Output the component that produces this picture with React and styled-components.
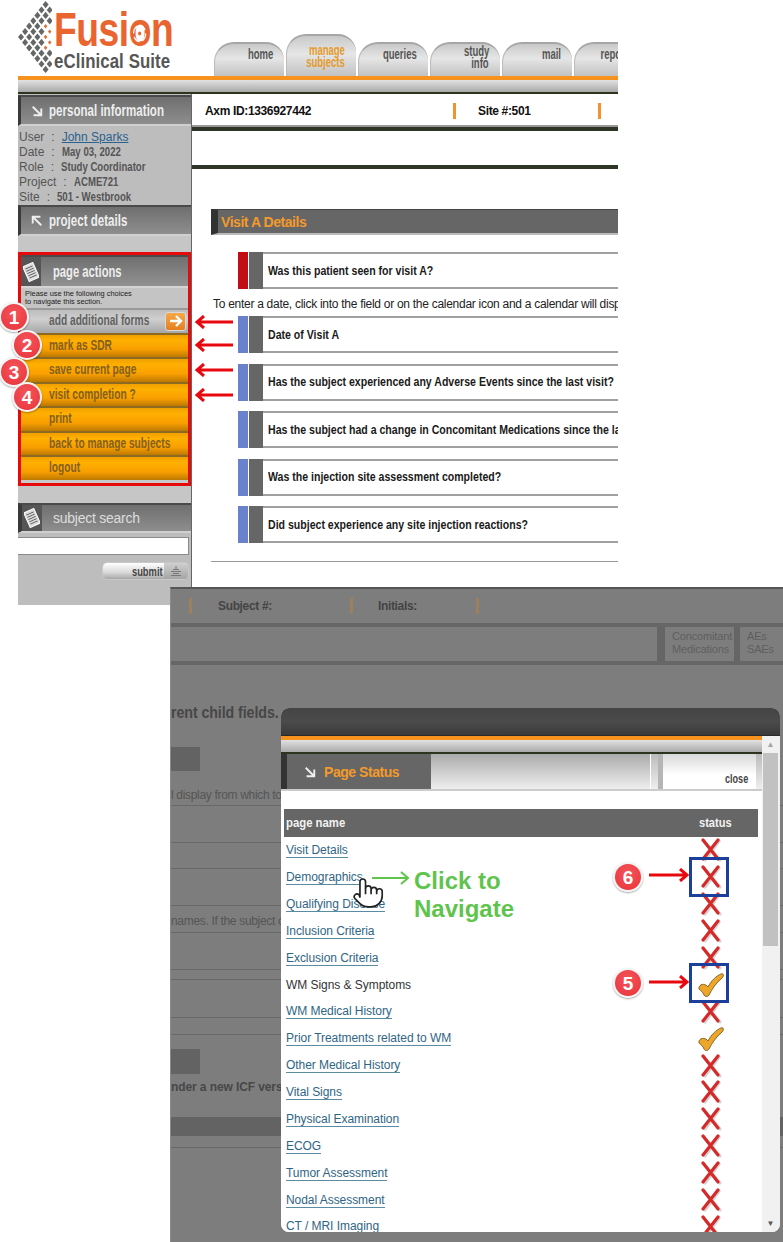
import styled, { createGlobalStyle } from 'styled-components'

const ARIAL = `"Liberation Sans", Arial, sans-serif`

const GlobalStyle = createGlobalStyle`
  html, body {
    margin: 0;
    background: #fff;
    font-family: ${ARIAL};
  }
  * { box-sizing: border-box; }
`

// the app's headings are set in a condensed face, squeezed here from Liberation Sans
const Narrow = styled.span`
  display: inline-block;
  white-space: nowrap;
  transform: scaleX(${p => p.$s});
  transform-origin: ${p => (p.$right ? 'right' : 'left')} center;
`

const Page = styled.div`
  position: relative;
  width: 783px;
  height: 1242px;
  overflow: hidden;
  background: #fff;
`

/* ---------- top screenshot ---------- */
const TopShot = styled.div`
  width: 600px;
  height: 605px;
  margin-left: 18px;
  overflow: hidden;
  display: flex;
  flex-direction: column;
`
const Masthead = styled.div`
  display: flex;
  align-items: flex-end;
  height: 76px;
  flex-shrink: 0;
`
const Logo = styled.div`
  width: 196px;
  height: 76px;
  flex-shrink: 0;
  display: flex;
  gap: 2px;
`
const LogoWords = styled.div`
  display: flex;
  flex-direction: column;
  padding-top: 8px;
`
const FusionWord = styled(Narrow)`
  font: bold 49px/43px ${ARIAL};
  color: #e9642f;
  letter-spacing: -0.6px;
`
const FusionO = styled.span`
  position: relative;
  display: inline-block;
`
const FusionRing = styled.svg`
  position: absolute;
  left: 0;
  top: 12px;
  width: 100%;
  height: 27px;
`
const SuiteWord = styled(Narrow)`
  font: bold 20.5px/20px ${ARIAL};
  color: #565656;
  letter-spacing: 0.1px;
`
const Tabs = styled.div`
  display: flex;
  align-items: flex-end;
  gap: 2px;
`
const Tab = styled.div`
  width: 70px;
  height: ${p => (p.$active ? 42 : 34)}px;
  flex-shrink: 0;
  padding: ${p => (p.$active ? 8 : p.$two ? 1 : 4)}px 11px 0 0;
  text-align: right;
  border-radius: 20px 18px 0 0;
  border-top: 2px solid #a6a6a6;
  border-left: 1px solid #bbb;
  background: linear-gradient(#c9c9c9, #e6e6e6 45%, #c2c2c2);
  font: bold 14px/12px ${ARIAL};
  color: ${p => (p.$active ? '#e39a2d' : '#555')};
`
const Band = styled.div`
  height: 18px;
  flex-shrink: 0;
  border-top: 4px solid #f6931e;
  border-bottom: 2px solid #2c331f;
  background: linear-gradient(#e2e2e2, #a9a9a9);
`
const ShotBody = styled.div`
  display: flex;
  flex: 1;
  min-height: 0;
`
const Sidebar = styled.div`
  width: 174px;
  flex-shrink: 0;
  padding-top: 1px;
  background: #bdbdbd;
  border-right: 1px solid #666;
  display: flex;
  flex-direction: column;
`
const SideHeader = styled.div`
  height: ${p => p.$h || 31}px;
  flex-shrink: 0;
  display: flex;
  align-items: center;
  gap: 6px;
  padding-left: ${p => (p.$plain ? 10 : 0)}px;
  background: linear-gradient(#6f6f6f, #8e8e8e);
  border-top: 2px solid #4a4a4a;
  border-bottom: 2px solid #d0d0d0;
  border-left: ${p => (p.$thick ? 4 : 3)}px solid #3a3a3a;
  font: bold 17px/1 ${ARIAL};
  color: #eee;
`
const SideIconBlock = styled.div`
  width: 20px;
  align-self: stretch;
  flex-shrink: 0;
  display: flex;
  align-items: center;
  justify-content: center;
  background: #555;
`
const SearchTitle = styled.span`
  margin-left: 5px;
  font: 14px/1 ${ARIAL};
  letter-spacing: -0.25px;
  color: #ddd;
`
const Info = styled.div`
  height: 79px;
  padding-top: 4px;
  background: #bdbdbd;
`
const InfoRow = styled.div`
  display: flex;
  gap: 7px;
  padding-left: 1px;
  font: 12px/15px ${ARIAL};
  color: #555;
`
const InfoValue = styled(Narrow)`
  font: bold 12.5px/15px ${ARIAL};
`
const InfoLink = styled.a`
  color: #2a628f;
  text-decoration: underline;
`
const SideGap = styled.div`
  height: ${p => p.$h}px;
  flex-shrink: 0;
  background: #c6c6c6;
`
const ActionsBox = styled.div`
  height: 234px;
  flex-shrink: 0;
  border: 3px solid #e60a0a;
  display: flex;
  flex-direction: column;
  background: #c9c9c9;
`
const ActionsHead = styled.div`
  height: 33px;
  flex-shrink: 0;
  display: flex;
  align-items: center;
  gap: 12px;
  background: linear-gradient(#6f6f6f, #929292);
  border-top: 2px solid #4a4a4a;
  border-bottom: 2px solid #d4d4d4;
  font: bold 17px/1 ${ARIAL};
  color: #eee;
`
const Hint = styled.div`
  height: 20px;
  flex-shrink: 0;
  padding: 2px 0 0 4px;
  font: 7.4px/8px ${ARIAL};
  color: #222;
  background: #c4c4c4;
`
const Action = styled.div`
  height: 24.5px;
  flex-shrink: 0;
  display: flex;
  align-items: center;
  padding: 0 2px 3px 28px;
  font: bold 15px/1 ${ARIAL};
  color: ${p => (p.$gray ? '#616161' : '#84601f')};
  border-top: 2px solid ${p => (p.$gray ? '#9a9a9a' : '#8c6a22')};
  background: ${p => (p.$gray
    ? 'linear-gradient(#bdbdbd, #cfcfcf 40%, #a6a6a6)'
    : 'linear-gradient(#f0a000, #ffb000 25%, #f99f00 65%, #bd7800)')};
`
const ActionLabel = styled(Narrow)`
  flex: 1;
  min-width: 0;
`
const ArrowChip = styled.div`
  width: 21px;
  height: 19px;
  flex-shrink: 0;
  margin-bottom: -3px;
  border-radius: 3px;
  background: linear-gradient(#f5a84a, #e57f1e);
  border: 1px solid #d9d9d9;
  display: flex;
  align-items: center;
  justify-content: center;
`
const SearchInput = styled.div`
  width: 171px;
  height: 18px;
  margin-top: 4px;
  background: #fff;
  border: 1px solid #8a8a8a;
  border-left: 0;
  flex-shrink: 0;
`
const SubmitButton = styled.div`
  align-self: flex-end;
  width: 87px;
  height: 18px;
  margin: 7px 2px 0 0;
  border: 1px solid #c8c8c8;
  border-radius: 5px;
  display: flex;
  justify-content: flex-end;
  align-items: center;
  overflow: hidden;
  background: linear-gradient(#fff, #d8d8d8 60%, #a8a8a8);
  font: bold 13px/1 ${ARIAL};
  color: #444;
`
const SubmitGrip = styled.div`
  width: 24px;
  height: 100%;
  margin-left: 1px;
  flex-shrink: 0;
  display: flex;
  align-items: center;
  justify-content: center;
  background: linear-gradient(#cfcfcf, #a5a5a5);
`
const Main = styled.div`
  flex: 1;
  min-width: 0;
  overflow: hidden;
  background: #fff;
`
const MetaRow = styled.div`
  height: ${p => p.$h}px;
  display: flex;
  align-items: center;
  padding-left: ${p => p.$pad}px;
  border-bottom: 4px solid #2f3527;
  box-shadow: inset 0 -2px 0 #9a9a9a;
  background: #fff;
`
const MetaCell = styled.div`
  width: ${p => p.$w}px;
  flex-shrink: 0;
  font: bold 12px/14px ${ARIAL};
  letter-spacing: -0.35px;
  color: #111;
`
const Tick = styled.div`
  width: 3px;
  height: 16px;
  margin-right: ${p => p.$after}px;
  flex-shrink: 0;
  background: ${p => p.$c || '#f3932b'};
`
const Blank = styled.div`
  height: ${p => p.$h}px;
  border-bottom: 4px solid #2f3527;
`
const Banner = styled.div`
  height: 26px;
  margin: 40px 0 17px 19px;
  padding-left: 3px;
  display: flex;
  align-items: center;
  background: #666;
  border-left: 7px solid #333;
  border-top: 1px solid #444;
  border-bottom: 2px solid #bbb;
  font: bold 14px/1 ${ARIAL};
  letter-spacing: -0.45px;
  color: #f39a2b;
`
const Question = styled.div`
  height: 37px;
  margin-left: 46px;
  display: flex;
  align-items: stretch;
  flex-shrink: 0;
  white-space: nowrap;
`
const Mark = styled.div`
  width: 10px;
  margin-right: 1px;
  flex-shrink: 0;
  background: ${p => (p.$required ? '#c10d16' : '#6a82cc')};
`
const MarkGray = styled.div`
  width: 14px;
  flex-shrink: 0;
  background: #666;
`
const QuestionText = styled.div`
  flex: 1;
  display: flex;
  align-items: center;
  padding-left: 5px;
  border-top: 2px solid #a0a0a0;
  border-bottom: 2px solid #a0a0a0;
  font: bold 12px/1 ${ARIAL};
  color: #1a1a1a;
`
const Note = styled.div`
  margin: 8px 0 5px 21px;
  white-space: nowrap;
  font: 12px/14px ${ARIAL};
  letter-spacing: -0.28px;
  color: #222;
`
const QuestionList = styled.div`
  display: flex;
  flex-direction: column;
  gap: 10.5px;
`
const MainRule = styled.div`
  height: 1px;
  margin: 18px 0 0 19px;
  background: #999;
`

/* ---------- bottom screenshot ---------- */
const BottomShot = styled.div`
  position: relative;
  width: 613px;
  height: 655px;
  margin: -18px 0 0 170px;
  background: #7d7d7d;
  border-top: 2px solid #555;
  border-left: 1px solid #8a8a8a;
`
const DimRow = styled.div`
  height: ${p => p.$h}px;
  display: flex;
  align-items: center;
  padding-left: ${p => p.$pad || 0}px;
  border-bottom: 4px solid #666;
`
const DimCell = styled.div`
  width: ${p => p.$w}px;
  flex-shrink: 0;
  font: bold 12px/14px ${ARIAL};
  letter-spacing: -0.35px;
  color: #444;
`
const DimTabs = styled.div`
  margin-left: auto;
  align-self: stretch;
  display: flex;
`
const DimTab = styled.div`
  width: ${p => p.$w}px;
  padding: 3px 0 0 7px;
  border-left: ${p => p.$edge}px solid #656565;
  font: 11px/13px ${ARIAL};
  letter-spacing: -0.15px;
  color: #5f5f5f;
`
const DimBody = styled.div`
  display: flex;
  flex-direction: column;
`
const DimText = styled.div`
  margin-top: ${p => p.$top}px;
  white-space: nowrap;
  font: ${p => (p.$strong ? 'bold' : 'normal')} ${p => p.$size || 12}px/${p => p.$lh || 14}px ${ARIAL};
  letter-spacing: ${p => (p.$strong ? -0.1 : -0.32)}px;
  color: ${p => (p.$strong ? '#474747' : '#555')};
`
const DimRule = styled.div`
  height: 1px;
  margin-top: ${p => p.$top}px;
  background: #686868;
`
const DimBlock = styled.div`
  width: ${p => p.$w}px;
  height: ${p => p.$h}px;
  margin-top: ${p => p.$top}px;
  background: #636363;
`

const Modal = styled.div`
  position: absolute;
  left: 110px;
  top: 119px;
  width: 499px;
  height: 524px;
  display: flex;
  flex-direction: column;
  background: #f3f3f3;
  border-radius: 8px;
  overflow: hidden;
`
const ModalTitle = styled.div`
  height: 28px;
  flex-shrink: 0;
  background: linear-gradient(#444, #4b4b4b 50%, #3a3a3a);
  border-bottom: 1px solid #2a2a2a;
`
const ModalBody = styled.div`
  flex: 1;
  min-height: 0;
  display: flex;
`
const ModalContent = styled.div`
  flex: 1;
  min-width: 0;
  display: flex;
  flex-direction: column;
  background: #fff;
`
const StatusHead = styled.div`
  height: 37px;
  flex-shrink: 0;
  display: flex;
  align-items: stretch;
  border-bottom: 2px solid #ccc;
`
const StatusTitle = styled.div`
  width: 150px;
  flex-shrink: 0;
  display: flex;
  align-items: center;
  gap: 8px;
  padding-left: 17px;
  border-left: 6px solid #333;
  background: #666;
  font: bold 14px/1 ${ARIAL};
  letter-spacing: -0.45px;
  color: #f39a2b;
`
const StatusFiller = styled.div`
  flex: 1;
  background: linear-gradient(#ababab, #eee);
`
const StatusStrip = styled.div`
  width: ${p => p.$w}px;
  flex-shrink: 0;
  margin-left: ${p => p.$gap || 0}px;
  background: ${p => p.$c || 'linear-gradient(#bbb, #eee)'};
`
const CloseCell = styled.div`
  width: 93px;
  flex-shrink: 0;
  display: flex;
  align-items: flex-end;
  justify-content: flex-end;
  padding: 0 8px 4px 0;
  background: linear-gradient(#d9d9d9, #fff 60%);
  font: bold 13px/1 ${ARIAL};
  color: #444;
`
const StatusTable = styled.div`
  flex: 1;
  min-height: 0;
  overflow: hidden;
  padding: 18px 4px 0 3px;
`
const TableHead = styled.div`
  height: 28px;
  display: grid;
  grid-template-columns: 1fr 94px;
  align-items: center;
  padding-left: 2px;
  background: #666;
  font: bold 13.5px/1 ${ARIAL};
  color: #f2f2f2;
`
const StatusLabel = styled(Narrow)`
  margin-left: 35px;
`
const TableRow = styled.div`
  height: 26.9px;
  display: grid;
  grid-template-columns: 1fr 94px;
  align-items: center;
  padding-left: 2px;
`
const PageLink = styled.a`
  justify-self: start;
  font: 12px/14px ${ARIAL};
  letter-spacing: -0.05px;
  color: ${p => (p.$current ? '#333' : '#2f6584')};
  border-bottom: ${p => (p.$current ? '0' : '1.5px solid #5b8ba3')};
`
const StatusCell = styled.div`
  display: flex;
  justify-content: center;
`
const Scrollbar = styled.div`
  width: 18px;
  flex-shrink: 0;
  display: flex;
  flex-direction: column;
  align-items: center;
  padding: 0 1px 0 0;
  background: #f1f1f1;
`
const ScrollArrow = styled.div`
  height: 17px;
  display: flex;
  align-items: center;
  color: ${p => (p.$dark ? '#555' : '#a3a3a3')};
  font: 8px/1 ${ARIAL};
  flex-shrink: 0;
`
const ScrollThumb = styled.div`
  width: 15px;
  height: 193px;
  background: #c1c1c1;
`
const ScrollSpace = styled.div`
  flex: 1;
`

/* ---------- annotations ---------- */
const Badge = styled.div`
  position: absolute;
  left: ${p => p.$x - 15}px;
  top: ${p => p.$y - 15}px;
  width: 30px;
  height: 30px;
  display: flex;
  align-items: center;
  justify-content: center;
  border-radius: 50%;
  border: 2px solid #f4f4f4;
  background: radial-gradient(circle at 50% 35%, #f4545a, #e8333a);
  box-shadow: 0 1px 2px rgba(0, 0, 0, 0.35);
  font: bold 19px/1 ${ARIAL};
  color: #fff;
`
const ArrowLayer = styled.svg`
  position: absolute;
  left: ${p => p.$x}px;
  top: ${p => p.$y}px;
`
const BlueFrame = styled.div`
  position: absolute;
  left: 689px;
  top: ${p => p.$y}px;
  width: 40px;
  height: 40px;
  border: 3px solid #1b3f9a;
`
const ClickLabel = styled.div`
  position: absolute;
  left: 414px;
  top: 867px;
  font: bold 24px/28px ${ARIAL};
  color: #5fc44c;
`
const Hand = styled.svg`
  position: absolute;
  left: 353px;
  top: 875px;
`
const ArrowGlyph = styled.svg`
  flex-shrink: 0;
  transform: ${p => (p.$up ? 'rotate(180deg)' : 'none')};
`

/* ---------- drawings ---------- */
const LogoMark = () => {
  const cells = []
  for (let s = 0; s <= 7; s++) {
    for (let d = -s; d <= s; d += 2) {
      if (Math.abs(d) > 6) continue
      const x = 3 + s * 4.1
      const y = 37 + d * 5.4
      const small = s >= 6 && Math.abs(d) < 3
      const rx = small ? 1.8 : 3
      const ry = small ? 2.2 : 3.6
      cells.push(
        <polygon key={`${s}_${d}`} fill={small ? '#d9743f' : '#666'}
          points={`${x - rx},${y} ${x},${y - ry} ${x + rx},${y} ${x},${y + ry}`} />
      )
    }
  }
  return <svg width="34" height="75" viewBox="0 0 34 75">{cells}</svg>
}

const CornerArrow = ({ up }) => (
  <ArrowGlyph $up={up} width="12" height="12" viewBox="0 0 14 14" fill="none" stroke="#eee" strokeWidth="2.2">
    <path d="M2 2 L12 12 M12 4 V12 H3" />
  </ArrowGlyph>
)

const Notepad = () => (
  <svg width="16" height="20" viewBox="0 0 16 20" fill="none">
    <g transform="rotate(-24 8 10)">
      <rect x="2.5" y="2" width="11" height="16" fill="#ddd" stroke="#fff" />
      <path d="M4 5h8M4 7.5h8M4 10h8M4 12.5h8M4 15h8" stroke="#555" strokeWidth="0.9" />
    </g>
  </svg>
)

const RedX = () => (
  <svg width="26" height="24" viewBox="0 0 26 24" fill="none" strokeLinecap="round">
    <path d="M6 3 L22 22 M21 3 L7 22" stroke="#d4d4d4" strokeWidth="3.2" />
    <path d="M5 2 L20 21 M20 2 L5 21" stroke="#d42a2a" strokeWidth="3.2" />
  </svg>
)

const Check = () => (
  <svg width="26" height="24" viewBox="0 0 26 24">
    <path d="M1 14 C3 10 8 11 10 14 C13 8 18 3 23 1 C26 0 26 3 24 5 C18 10 14 16 11 22 C10 24 7 24 6 22 C5 19 3 18 1 16 Z"
      fill="#eda52a" stroke="#85692a" strokeWidth="1" />
  </svg>
)

const RedArrow = ({ x, y, width }) => (
  <ArrowLayer $x={x} $y={y} width={width} height="14" viewBox={`0 0 ${width} 14`} fill="none"
    stroke="#e8090f" strokeWidth="3">
    <path d={`M${width} 7 H2 M9 1 L2 7 L9 13`} />
  </ArrowLayer>
)

const RedArrowRight = ({ x, y }) => (
  <ArrowLayer $x={x} $y={y} width="40" height="14" viewBox="0 0 40 14" fill="none"
    stroke="#e8090f" strokeWidth="3">
    <path d="M0 7 H38 M31 1 L38 7 L31 13" />
  </ArrowLayer>
)

const PAGES = [
  ['Visit Details', 'x'], ['Demographics', 'x'], ['Qualifying Disease', 'x'],
  ['Inclusion Criteria', 'x'], ['Exclusion Criteria', 'x'], ['WM Signs & Symptoms', 'c', true],
  ['WM Medical History', 'x'], ['Prior Treatments related to WM', 'c'],
  ['Other Medical History', 'x'], ['Vital Signs', 'x'], ['Physical Examination', 'x'],
  ['ECOG', 'x'], ['Tumor Assessment', 'x'], ['Nodal Assessment', 'x'], ['CT / MRI Imaging', 'x'],
]

const ACTIONS = ['mark as SDR', 'save current page', 'visit completion ?', 'print',
  'back to manage subjects', 'logout']

const QUESTIONS = ['Has the subject experienced any Adverse Events since the last visit?',
  'Has the subject had a change in Concomitant Medications since the last visit?',
  'Was the injection site assessment completed?',
  'Did subject experience any site injection reactions?']

const INFO = [['Date', 'May 03, 2022'], ['Role', 'Study Coordinator'],
  ['Project', 'ACME721'], ['Site', '501 - Westbrook']]

const TabLabel = ({ children }) => <Narrow $s={0.68} $right>{children}</Narrow>

const App = () => (
  <Page>
    <GlobalStyle />
    <TopShot>
      <Masthead>
        <Logo>
          <LogoMark />
          <LogoWords>
            <FusionWord $s={0.76}>
              Fusi
              <FusionO>
                o
                <FusionRing viewBox="0 0 27 27" fill="none">
                  <circle cx="13.5" cy="13.5" r="8" stroke="#fff" strokeWidth="1.6" strokeDasharray="9 3.5" />
                  <circle cx="13.5" cy="13.5" r="3.4" fill="#fff" />
                  <circle cx="13.5" cy="13.5" r="2" fill="#e9642f" />
                </FusionRing>
              </FusionO>
              n
            </FusionWord>
            <SuiteWord $s={0.82}>eClinical Suite</SuiteWord>
          </LogoWords>
        </Logo>
        <Tabs>
          <Tab><TabLabel>home</TabLabel></Tab>
          <Tab $active><TabLabel>manage</TabLabel><br /><TabLabel>subjects</TabLabel></Tab>
          <Tab><TabLabel>queries</TabLabel></Tab>
          <Tab $two><TabLabel>study</TabLabel><br /><TabLabel>info</TabLabel></Tab>
          <Tab><TabLabel>mail</TabLabel></Tab>
          <Tab><TabLabel>reports</TabLabel></Tab>
        </Tabs>
      </Masthead>
      <Band />
      <ShotBody>
        <Sidebar>
          <SideHeader $plain>
            <CornerArrow />
            <Narrow $s={0.68}>personal information</Narrow>
          </SideHeader>
          <Info>
            <InfoRow><span>User</span><span>:</span><InfoLink>John Sparks</InfoLink></InfoRow>
            {INFO.map(([label, value]) => (
              <InfoRow key={label}>
                <span>{label}</span><span>:</span><InfoValue $s={0.77}>{value}</InfoValue>
              </InfoRow>
            ))}
          </Info>
          <SideHeader $plain>
            <CornerArrow up />
            <Narrow $s={0.68}>project details</Narrow>
          </SideHeader>
          <SideGap $h={16} />
          <ActionsBox>
            <ActionsHead>
              <SideIconBlock><Notepad /></SideIconBlock>
              <Narrow $s={0.66}>page actions</Narrow>
            </ActionsHead>
            <Hint>Please use the following choices<br />to navigate this section.</Hint>
            <Action $gray>
              <ActionLabel $s={0.68}>add additional forms</ActionLabel>
              <ArrowChip>
                <svg width="14" height="12" viewBox="0 0 14 12" fill="none" stroke="#fff" strokeWidth="2.4">
                  <path d="M1 6 H12 M7 1 L12 6 L7 11" />
                </svg>
              </ArrowChip>
            </Action>
            {ACTIONS.map(label => <Action key={label}><ActionLabel $s={0.68}>{label}</ActionLabel></Action>)}
          </ActionsBox>
          <SideGap $h={17} />
          <SideHeader $h={30} $thick>
            <SideIconBlock><Notepad /></SideIconBlock>
            <SearchTitle>subject search</SearchTitle>
          </SideHeader>
          <SearchInput />
          <SubmitButton>
            <Narrow $s={0.72} $right>submit</Narrow>
            <SubmitGrip>
              <svg width="12" height="10" viewBox="0 0 12 10" stroke="#777" strokeWidth="1">
                <path d="M6 0v3M3 3.5h6M1 5.5h10M3 7.5h6M1 9.5h10" />
              </svg>
            </SubmitGrip>
          </SubmitButton>
        </Sidebar>
        <Main>
          <MetaRow $h={37} $pad={13}>
            <MetaCell $w={248}>Axm ID:1336927442</MetaCell>
            <Tick $after={22} />
            <MetaCell $w={120}>Site #:501</MetaCell>
            <Tick $after={0} />
          </MetaRow>
          <Blank $h={38} />
          <Banner>Visit A Details</Banner>
          <Question>
            <Mark $required /><MarkGray />
            <QuestionText><Narrow $s={0.88}>Was this patient seen for visit A?</Narrow></QuestionText>
          </Question>
          <Note>To enter a date, click into the field or on the calendar icon and a calendar will display from which to</Note>
          <QuestionList>
            <Question>
              <Mark /><MarkGray />
              <QuestionText><Narrow $s={0.88}>Date of Visit A</Narrow></QuestionText>
            </Question>
            {QUESTIONS.map(q => (
              <Question key={q}>
                <Mark /><MarkGray />
                <QuestionText><Narrow $s={0.88}>{q}</Narrow></QuestionText>
              </Question>
            ))}
          </QuestionList>
          <MainRule />
        </Main>
      </ShotBody>
    </TopShot>

    <BottomShot>
      <DimRow $h={38} $pad={18}>
        <Tick $after={26} $c="#9c7f5d" />
        <DimCell $w={132}>Subject #:</DimCell>
        <Tick $after={25} $c="#9c7f5d" />
        <DimCell $w={98}>Initials:</DimCell>
        <Tick $after={0} $c="#9c7f5d" />
      </DimRow>
      <DimRow $h={38}>
        <DimTabs>
          <DimTab $w={77} $edge={8}>Concomitant<br />Medications</DimTab>
          <DimTab $w={49} $edge={6}>AEs<br />SAEs</DimTab>
        </DimTabs>
      </DimRow>
      <DimBody>
        <DimText $top={38} $strong $size={16} $lh={20}><Narrow $s={0.89}>rent child fields.</Narrow></DimText>
        <DimBlock $top={24} $w={29} $h={24} />
        <DimText $top={17}>l display from which to</DimText>
        <DimRule $top={3} />
        <DimRule $top={36} />
        <DimRule $top={25} />
        <DimRule $top={36} />
        <DimText $top={8}>names. If the subject c</DimText>
        <DimRule $top={4} />
        <DimRule $top={36} />
        <DimRule $top={9} />
        <DimRule $top={37} />
        <DimRule $top={16} />
        <DimBlock $top={14} $w={29} $h={25} />
        <DimText $top={6} $strong>nder a new ICF versi</DimText>
        <DimBlock $top={23} $w={613} $h={19} />
        <DimRule $top={11} />
      </DimBody>
      <Modal>
        <ModalTitle />
        <ModalBody>
          <ModalContent>
            <Band />
            <StatusHead>
              <StatusTitle>
                <CornerArrow />
                Page Status
              </StatusTitle>
              <StatusFiller />
              <StatusStrip $w={7} $gap={1} />
              <StatusStrip $w={5} $c="#b5b5b5" />
              <CloseCell><Narrow $s={0.7} $right>close</Narrow></CloseCell>
              <StatusStrip $w={6} />
            </StatusHead>
            <StatusTable>
              <TableHead>
                <Narrow $s={0.84}>page name</Narrow>
                <StatusLabel $s={0.82}>status</StatusLabel>
              </TableHead>
              {PAGES.map(([name, state, current]) => (
                <TableRow key={name}>
                  <PageLink $current={current}>{name}</PageLink>
                  <StatusCell>{state === 'x' ? <RedX /> : <Check />}</StatusCell>
                </TableRow>
              ))}
            </StatusTable>
          </ModalContent>
          <Scrollbar>
            <ScrollArrow>▲</ScrollArrow>
            <ScrollThumb />
            <ScrollSpace />
            <ScrollArrow $dark>▼</ScrollArrow>
          </Scrollbar>
        </ModalBody>
      </Modal>
    </BottomShot>

    <Badge $x={14} $y={317}>1</Badge>
    <Badge $x={27} $y={345}>2</Badge>
    <Badge $x={14} $y={372}>3</Badge>
    <Badge $x={27} $y={397}>4</Badge>
    <RedArrow x={195} y={315} width={38} />
    <RedArrow x={195} y={338} width={38} />
    <RedArrow x={195} y={363} width={38} />
    <RedArrow x={195} y={388} width={38} />

    <BlueFrame $y={857} />
    <BlueFrame $y={963} />
    <Badge $x={628} $y={877}>6</Badge>
    <Badge $x={628} $y={983}>5</Badge>
    <RedArrowRight x={649} y={868} />
    <RedArrowRight x={649} y={975} />

    <ArrowLayer $x={372} $y={871} width="38" height="14" viewBox="0 0 38 14" fill="none"
      stroke="#5fc44c" strokeWidth="2">
      <path d="M0 7 H36 M29 1 L36 7 L29 13" />
    </ArrowLayer>
    <Hand width="32" height="40" viewBox="1 1 23 25" fill="#fff" stroke="#222" strokeWidth="1.2"
      strokeLinejoin="round">
      <path d="M6 14 V4 a2 2 0 0 1 4 0 V9 a2 2 0 0 1 4 0 v1 a2 2 0 0 1 4 0 v1 a2 2 0 0 1 4 0 v3 a8 8 0 0 1 -8 8 h-2 c-2.8 0 -4.5 -.86 -5.99 -2.34 l-3.6 -3.6 a2 2 0 0 1 2.83 -2.82 L6 15 Z" />
      <path d="M10 9 V13 M14 10 V13 M18 11 V13" fill="none" />
    </Hand>
    <ClickLabel>Click to<br />Navigate</ClickLabel>
  </Page>
)

export default App
